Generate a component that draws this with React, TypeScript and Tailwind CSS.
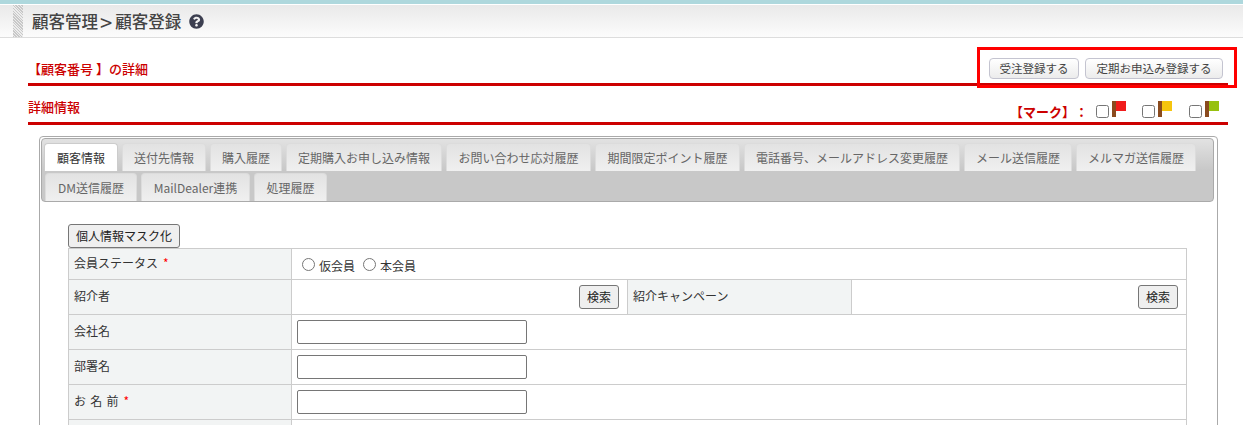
import React from 'react';
import { FaQuestionCircle } from 'react-icons/fa';

const font = { fontFamily: '"Noto Sans CJK JP", "Liberation Sans", sans-serif' };

const tabRows = [
  [
    { label: '顧客情報', w: 'w-[74px]', active: true },
    { label: '送付先情報', w: 'w-[84px]' },
    { label: '購入履歴', w: 'w-[72px]' },
    { label: '定期購入お申し込み情報', w: 'w-[156px]' },
    { label: 'お問い合わせ応対履歴', w: 'w-[145px]' },
    { label: '期間限定ポイント履歴', w: 'w-[145px]' },
    { label: '電話番号、メールアドレス変更履歴', w: 'w-[216px]' },
    { label: 'メール送信履歴', w: 'w-[108px]' },
    { label: 'メルマガ送信履歴', w: 'w-[120px]' },
  ],
  [
    { label: 'DM送信履歴', w: 'w-[92px]' },
    { label: 'MailDealer連携', w: 'w-[109px]' },
    { label: '処理履歴', w: 'w-[73px]' },
  ],
];

const Flag = ({ color }: { color: string }) => (
  <svg width="15" height="16" viewBox="0 0 15 16" className="block">
    <rect x="0" y="0" width="4" height="16" fill="#8a4b1f" />
    <rect x="4" y="0" width="10" height="10" fill={color} />
  </svg>
);

const Th = ({ children, required }: { children?: React.ReactNode; required?: boolean }) => (
  <th className="border border-[#ccc] bg-[#f2f4f4] pb-[3px] pl-[5px] text-left align-middle font-normal">
    {children}
    {required && <span className="ml-[5px] text-[#f00]">*</span>}
  </th>
);

const SearchButton = () => (
  <button className="h-[24px] w-[40px] rounded-[3px] border border-[#767676] bg-[#efefef] align-middle text-[12px] text-[#222]">
    検索
  </button>
);

const TextRow = ({ label, required }: { label: string; required?: boolean }) => (
  <tr className="h-[35px]">
    <Th required={required}>
      <span className="[word-spacing:1.5px]">{label}</span>
    </Th>
    <td colSpan={3} className="border border-[#ccc] pl-[5px]">
      <input className="block h-[24px] w-[230px] rounded-[2px] border border-[#767676] bg-white" />
    </td>
  </tr>
);

export default function App() {
  return (
    <div className="h-[425px] w-[1243px] overflow-hidden bg-white text-[12px] text-[#333]" style={font}>
      <div className="h-[4px] bg-[#aed8dd]" />
      <div className="mt-[1px] flex h-[33px] items-stretch border-b border-[#ddd] bg-gradient-to-b from-[#e9e9e9] to-[#fcfcfc] pl-[13px]">
        <div className="w-[10px] bg-[repeating-linear-gradient(45deg,#c8c8c8_0,#c8c8c8_1px,#ececec_1px,#ececec_2px)]" />
        <h1 className="ml-[9px] flex items-center text-[16.5px] font-medium leading-none text-[#444]">
          顧客管理
          <span className="ml-[2px] mr-[3px] text-[22px] font-normal leading-none">&gt;</span>
          顧客登録
          <FaQuestionCircle className="ml-[8px] text-[15px] text-[#3c3f50]" />
        </h1>
      </div>

      <div className="relative ml-[28px] mr-[15px] mt-[9px] flex h-[39px] items-end justify-between border-b-[3px] border-[#c00] pb-[5px] text-[13px] font-medium text-[#c00]">
        <span className="leading-[18px]">【顧客番号 】の詳細</span>
        <div className="absolute right-[-9px] top-0 flex h-[41px] w-[260px] gap-[6px] border-[3px] border-[#f00] pl-[9px] pt-[8px] font-normal">
          <button className="h-[21px] w-[90px] rounded-[4px] border border-[#c4c4d0] bg-gradient-to-b from-white to-[#ececec] text-[11.5px] text-[#444]">
            受注登録する
          </button>
          <button className="h-[21px] w-[138px] rounded-[4px] border border-[#c4c4d0] bg-gradient-to-b from-white to-[#ececec] text-[11.5px] text-[#444]">
            定期お申込み登録する
          </button>
        </div>
      </div>

      <div className="ml-[28px] mr-[15px] mt-[11px] flex h-[28px] items-start justify-between border-b-[3px] border-[#c00] text-[13px] font-medium text-[#c00]">
        <span className="mt-[1px] leading-[18px]">詳細情報</span>
        <div className="mr-[8px] mt-[4px] flex items-start">
          <span className="mr-[8px] mt-[2px] font-bold leading-[18px] [text-spacing-trim:space-all]">【マーク】：</span>
          <div className="flex gap-[15px]">
            {['#f01c1c', '#f6c50e', '#97c10f'].map((c, i) => (
              <div key={c} className={`flex items-start ${i === 2 ? 'ml-[1px]' : ''}`}>
                <input type="checkbox" className="mr-[3px] mt-[4px] h-[13px] w-[13px]" />
                <Flag color={c} />
              </div>
            ))}
          </div>
        </div>
      </div>

      <div className="ml-[39px] mt-[11px] h-[400px] w-[1179px] rounded-[4px] border border-[#aaa] pb-[1px] pl-[1px] pr-[3px] pt-[1px]">
        <div className="h-[64px] rounded-[4px] border border-[#aaa] bg-[linear-gradient(#e2e2e2,#c8c8c8_50%)] pl-[2px] pt-[4px]">
          {tabRows.map((row, i) => (
            <div key={i} className={`mb-[2px] flex gap-[4px] ${i === 1 ? 'pl-[1px]' : ''}`}>
              {row.map((t) => (
                <div
                  key={t.label}
                  className={`flex h-[28px] items-center justify-center rounded-t-[4px] border border-b-0 ${t.w} ${
                    t.active
                      ? 'border-[#ccc] bg-white text-[#333]'
                      : 'border-[#dcdcdc] bg-gradient-to-b from-[#e2e2e2] to-[#f0f0f0] text-[#666]'
                  }`}
                >
                  {t.label}
                </div>
              ))}
            </div>
          ))}
        </div>

        <div className="ml-[27px] mt-[22px] w-[1118px]">
          <button className="block h-[24px] w-[112px] rounded-[3px] border border-[#767676] bg-[#efefef] text-[12px] text-[#222]">
            個人情報マスク化
          </button>
          <table className="w-[1118px] table-fixed border-collapse">
            <colgroup>
              <col className="w-[223px]" />
              <col className="w-[336px]" />
              <col className="w-[224px]" />
              <col className="w-[335px]" />
            </colgroup>
            <tbody>
              <tr className="h-[31px]">
                <Th required>会員ステータス</Th>
                <td colSpan={3} className="border border-[#ccc] pl-[10px] pt-[2px]">
                  <label className="inline-flex items-center">
                    <input type="radio" name="status" className="mb-[2px] mr-[4px] h-[13px] w-[13px]" />
                    <span className="mt-[1px]">仮会員</span>
                  </label>
                  <label className="ml-[8px] inline-flex items-center">
                    <input type="radio" name="status" className="mb-[2px] mr-[4px] h-[13px] w-[13px]" />
                    <span className="mt-[1px]">本会員</span>
                  </label>
                </td>
              </tr>
              <tr className="h-[35px]">
                <Th>紹介者</Th>
                <td className="border border-[#ccc] pr-[8px] text-right">
                  <SearchButton />
                </td>
                <Th>紹介キャンペーン</Th>
                <td className="border border-[#ccc] pr-[8px] text-right">
                  <SearchButton />
                </td>
              </tr>
              <TextRow label="会社名" />
              <TextRow label="部署名" />
              <TextRow label="お 名 前" required />
              <tr className="h-[35px]">
                <Th />
                <td colSpan={3} className="border border-[#ccc]" />
              </tr>
            </tbody>
          </table>
        </div>
      </div>
    </div>
  );
}
